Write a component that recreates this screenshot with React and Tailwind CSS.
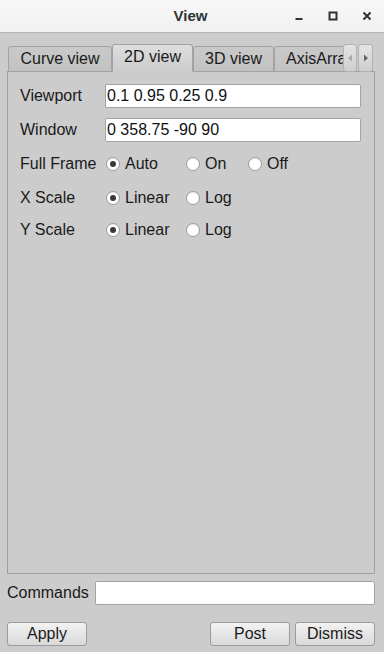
import React, { useState } from "react";

function Radio({ checked, label, width }) {
  return (
    <label className={`flex items-center gap-[5px] ${width}`}>
      <span className="w-[14px] h-[14px] rounded-full border border-[#9a9a9a] bg-white flex items-center justify-center shadow-[inset_0_1px_1px_rgba(0,0,0,0.08)]">
        {checked && <span className="w-[6px] h-[6px] rounded-full bg-[#3a3a3a]"></span>}
      </span>
      <span>{label}</span>
    </label>
  );
}

function Field({ label, value }) {
  return (
    <div className="flex items-center h-[24px]">
      <div className="w-[85px]">{label}</div>
      <input
        defaultValue={value}
        className="w-[256px] h-[24px] bg-white border border-[#a3a3a3] rounded-[2px] px-[1px] outline-none text-[16px] text-[#111]"
      />
    </div>
  );
}

function Button({ children }) {
  return (
    <button className="w-[80px] h-[24px] border border-[#9c9c9c] rounded-[3px] bg-gradient-to-b from-[#f2f2f2] to-[#d9d9d9] text-[#1a1a1a] leading-none">
      {children}
    </button>
  );
}

function App() {
  const [tab] = useState("2D view");
  const tabs = [
    { name: "Curve view", w: "w-[104px]" },
    { name: "2D view", w: "w-[81px]" },
    { name: "3D view", w: "w-[81px]" },
    { name: "AxisArrays", w: "w-[90px]" },
  ];

  return (
    <div className="w-[384px] h-[652px] bg-[#cccccc] flex flex-col text-[16px] text-[#1a1a1a] font-['Liberation_Sans',Arial,sans-serif] overflow-hidden">
      {/* title bar */}
      <div className="h-[33px] bg-gradient-to-b from-[#f8f8f8] to-[#f0f0f0] border-b border-[#b5b5b5] grid grid-cols-[1fr_auto_1fr] items-center shrink-0">
        <div></div>
        <div className="text-[15px] font-bold text-[#2e3436] pr-[3px]">View</div>
        <div className="flex justify-end h-full">
          <div className="w-[34px] h-full flex items-center justify-center">
            <svg width="10" height="10" viewBox="0 0 10 10">
              <rect x="1.5" y="7" width="7" height="2" fill="#2e3436" />
            </svg>
          </div>
          <div className="w-[34px] h-full flex items-center justify-center">
            <svg width="10" height="10" viewBox="0 0 10 10">
              <rect x="1.5" y="1.5" width="7" height="7" fill="none" stroke="#2e3436" strokeWidth="2" />
            </svg>
          </div>
          <div className="w-[34px] h-full flex items-center justify-center">
            <svg width="10" height="10" viewBox="0 0 10 10">
              <path d="M1.5 1.5 L8.5 8.5 M8.5 1.5 L1.5 8.5" stroke="#2e3436" strokeWidth="2" />
            </svg>
          </div>
        </div>
      </div>

      <div className="flex-1 flex flex-col pl-[7px] pr-[9px] pt-[12px] pb-[6px]">
        {/* tabs */}
        <div className="flex items-end h-[27px] relative z-10 -mb-px">
          <div className="flex items-end w-[337px] pl-[1px] overflow-hidden">
            {tabs.map((t) => {
              const active = t.name === tab;
              return (
                <div
                  key={t.name}
                  className={`${t.w} shrink-0 flex items-center border border-[#a2a2a2] rounded-t-[3px] whitespace-nowrap ${
                    active
                      ? "h-[28px] bg-gradient-to-b from-[#dedede] to-[#cccccc] border-b-[#cccccc] pb-[3px] relative z-10"
                      : "h-[26px] bg-gradient-to-b from-[#c9c9c9] to-[#c2c2c2]"
                  } ${t.name === "AxisArrays" ? "justify-start pl-[11px]" : "justify-center"}`}
                >
                  {t.name}
                </div>
              );
            })}
          </div>
          <div className="flex gap-[1px] h-[28px] -ml-px">
            <div className="w-[14px] h-full border border-[#b2b2b2] rounded-[3px] bg-gradient-to-b from-[#e4e4e4] to-[#cfcfcf] flex items-center justify-center">
              <svg width="6" height="8" viewBox="0 0 6 8">
                <path d="M5 0.5 L1 4 L5 7.5 Z" fill="#a8a8a8" />
              </svg>
            </div>
            <div className="w-[15px] h-full border border-[#b2b2b2] rounded-[3px] bg-gradient-to-b from-[#e4e4e4] to-[#cfcfcf] flex items-center justify-center">
              <svg width="6" height="8" viewBox="0 0 6 8">
                <path d="M1 0.5 L5 4 L1 7.5 Z" fill="#666" />
              </svg>
            </div>
          </div>
        </div>

        {/* panel */}
        <div className="h-[503px] border border-[#a0a0a0] pl-[12px] pt-[12px] flex flex-col">
          <Field label="Viewport" value="0.1 0.95 0.25 0.9" />
          <div className="mt-[10px]">
            <Field label="Window" value="0 358.75 -90 90" />
          </div>
          <div className="flex items-center h-[24px] mt-[10px]">
            <div className="w-[86px]">Full Frame</div>
            <Radio checked label="Auto" width="w-[80px]" />
            <Radio label="On" width="w-[62px]" />
            <Radio label="Off" />
          </div>
          <div className="flex items-center h-[24px] mt-[10px]">
            <div className="w-[86px]">X Scale</div>
            <Radio checked label="Linear" width="w-[80px]" />
            <Radio label="Log" />
          </div>
          <div className="flex items-center h-[24px] mt-[8px]">
            <div className="w-[86px]">Y Scale</div>
            <Radio checked label="Linear" width="w-[80px]" />
            <Radio label="Log" />
          </div>
        </div>

        {/* commands */}
        <div className="flex items-center gap-[6px] mt-[7px] h-[24px]">
          <div>Commands</div>
          <input className="flex-1 h-[24px] bg-white border border-[#a3a3a3] rounded-[2px] outline-none px-[2px]" />
        </div>

        {/* buttons */}
        <div className="flex items-center mt-[17px]">
          <Button>Apply</Button>
          <div className="flex-1"></div>
          <div className="flex gap-[5px]">
            <Button>Post</Button>
            <Button>Dismiss</Button>
          </div>
        </div>
      </div>
    </div>
  );
}

export default App;
